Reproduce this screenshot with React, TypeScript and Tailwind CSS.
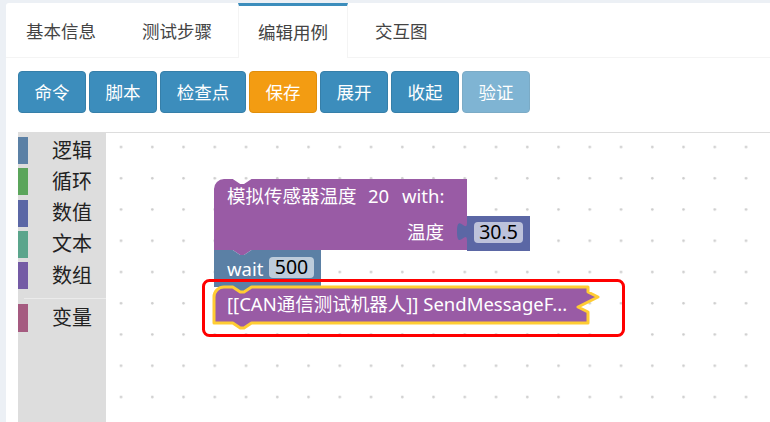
const tabs = ['基本信息', '测试步骤', '编辑用例', '交互图'];

const buttons = [
  { label: '命令', w: 'w-[68px]', cls: 'bg-[#3c8dbc] border-[#367fa9]' },
  { label: '脚本', w: 'w-[68px]', cls: 'bg-[#3c8dbc] border-[#367fa9]' },
  { label: '检查点', w: 'w-[86px]', cls: 'bg-[#3c8dbc] border-[#367fa9]' },
  { label: '保存', w: 'w-[68px]', cls: 'bg-[#f39c12] border-[#e08e0b]' },
  { label: '展开', w: 'w-[68px]', cls: 'bg-[#3c8dbc] border-[#367fa9]' },
  { label: '收起', w: 'w-[68px]', cls: 'bg-[#3c8dbc] border-[#367fa9]' },
  { label: '验证', w: 'w-[68px]', cls: 'bg-[#3c8dbc] border-[#367fa9] opacity-65' },
];

const categories = [
  { label: '逻辑', color: 'bg-[#5b80a5]' },
  { label: '循环', color: 'bg-[#5ba55b]' },
  { label: '数值', color: 'bg-[#5b67a5]' },
  { label: '文本', color: 'bg-[#5ba58c]' },
  { label: '数组', color: 'bg-[#745ba5]' },
];

const font = "'Noto Sans', 'Noto Sans CJK SC', sans-serif";

// notch / bump helpers (blockly geras, scaled 1.25)
const NOTCH = 'l 7.5,5 3.75,0 7.5,-5';
const BUMP = 'l -7.5,5 -3.75,0 -7.5,-5';

const Workspace = () => (
  <svg className="absolute inset-0 w-full h-full" style={{ fontFamily: font }}>
    <defs>
      <pattern id="grid" width="31.25" height="31.25" patternUnits="userSpaceOnUse">
        <circle cx="15" cy="14" r="1.3" fill="#cccccc" />
      </pattern>
    </defs>
    <rect width="100%" height="100%" fill="url(#grid)" />

    {/* procedure call block */}
    <path
      d={`M 108,56 a 10,10 0 0 1 10,-10 H 126.75 ${NOTCH} H 361 V 117 H 145.5 ${BUMP} H 108 Z`}
      fill="#995ba5"
    />
    <text x="121" y="70" fill="#fff" fontSize="18.5">模拟传感器温度</text>
    <text x="262" y="70" fill="#fff" fontSize="18.5">20</text>
    <text x="296" y="70" fill="#fff" fontSize="18.5">with:</text>
    <text x="301" y="106" fill="#fff" fontSize="18.5">温度</text>

    {/* number value block */}
    <path
      d="M 361,83 V 89.25 c 0,12.5 -10,-10 -10,9.4 s 10,-3.1 10,9.4 V 118 H 424 V 83 Z"
      fill="#5b67a5"
    />
    <rect x="368" y="89" width="49" height="21" rx="4" fill="#bdc2db" />
    <text x="392.5" y="106" fill="#000" fontSize="19.5" textAnchor="middle">30.5</text>

    {/* wait block */}
    <path
      d={`M 108,117 H 126.75 ${NOTCH} H 215 V 154 H 145.5 ${BUMP} H 108 Z`}
      fill="#5b80a5"
    />
    <text x="121" y="143" fill="#fff" fontSize="18.5">wait</text>
    <rect x="163" y="124" width="45" height="21" rx="4" fill="#bdccdb" />
    <text x="185.5" y="141" fill="#000" fontSize="19.5" textAnchor="middle">500</text>

    {/* selected collapsed block */}
    <path
      d={`M 108,164 a 10,10 0 0 1 10,-10 H 126.75 ${NOTCH} H 472 l 10,0 0,5 10,5 -20,10 10,5 V 190 H 145.5 ${BUMP} H 108 Z`}
      fill="#995ba5"
      stroke="#ffcc33"
      strokeWidth="3"
      strokeLinejoin="round"
    />
    <text x="121" y="178" fill="#fff" fontSize="18.5">[[CAN通信测试机器人]] SendMessageF...</text>

    {/* highlight frame */}
    <rect x="97.5" y="147.5" width="420" height="55" rx="6" fill="none" stroke="#ff0000" strokeWidth="3" />
  </svg>
);

const App = () => {
  return (
    <div
      className="w-[770px] h-[422px] overflow-hidden bg-[#ecf0f5] pl-[6px] pt-[3px]"
      style={{ fontFamily: font }}
    >
      <div className="bg-white rounded-tl-[3px] h-full w-[800px] flex flex-col">
        {/* Tabs */}
        <ul className="flex h-[55px] border-b border-[#f4f4f4]">
          {tabs.map((t, i) =>
            i === 2 ? (
              <li
                key={t}
                className="h-[55px] -mb-px mr-[7px] px-[19px] flex items-center border-t-[3px] border-t-[#3c8dbc] border-x border-x-[#f4f4f4] bg-white text-[17.5px] text-[#444]"
              >
                {t}
              </li>
            ) : (
              <li
                key={t}
                className="h-[54px] mr-[6px] px-[20px] flex items-center border-t-[3px] border-t-transparent text-[17.5px] text-[#444]"
              >
                {t}
              </li>
            )
          )}
        </ul>

        {/* Toolbar */}
        <div className="flex gap-[3px] pl-[12px] mt-[13px]">
          {buttons.map((b) => (
            <button
              key={b.label}
              className={`${b.w} ${b.cls} h-[42px] border rounded-[4px] text-white text-[17.5px] flex items-center justify-center`}
            >
              {b.label}
            </button>
          ))}
        </div>

        {/* Blockly workspace */}
        <div className="flex flex-1 ml-[12px] mt-[19px] border-t border-[#dddddd]">
          <div className="w-[88px] bg-[#dddddd] pt-[4px] flex flex-col gap-[4.25px]">
            {categories.map((c) => (
              <div key={c.label} className="h-[27px] flex items-center">
                <div className={`w-[10px] h-full ${c.color}`} />
                <span className="ml-[24px] text-[20px] text-[#222]">{c.label}</span>
              </div>
            ))}
            <div className="h-[6px] ml-[6px] border-b border-[#ebebeb]" />
            <div className="h-[28px] flex items-center">
              <div className="w-[10px] h-full bg-[#a55b80]" />
              <span className="ml-[24px] text-[20px] text-[#222]">变量</span>
            </div>
          </div>
          <div className="flex-1 relative bg-white">
            <Workspace />
          </div>
        </div>
      </div>
    </div>
  );
};

export default App;
